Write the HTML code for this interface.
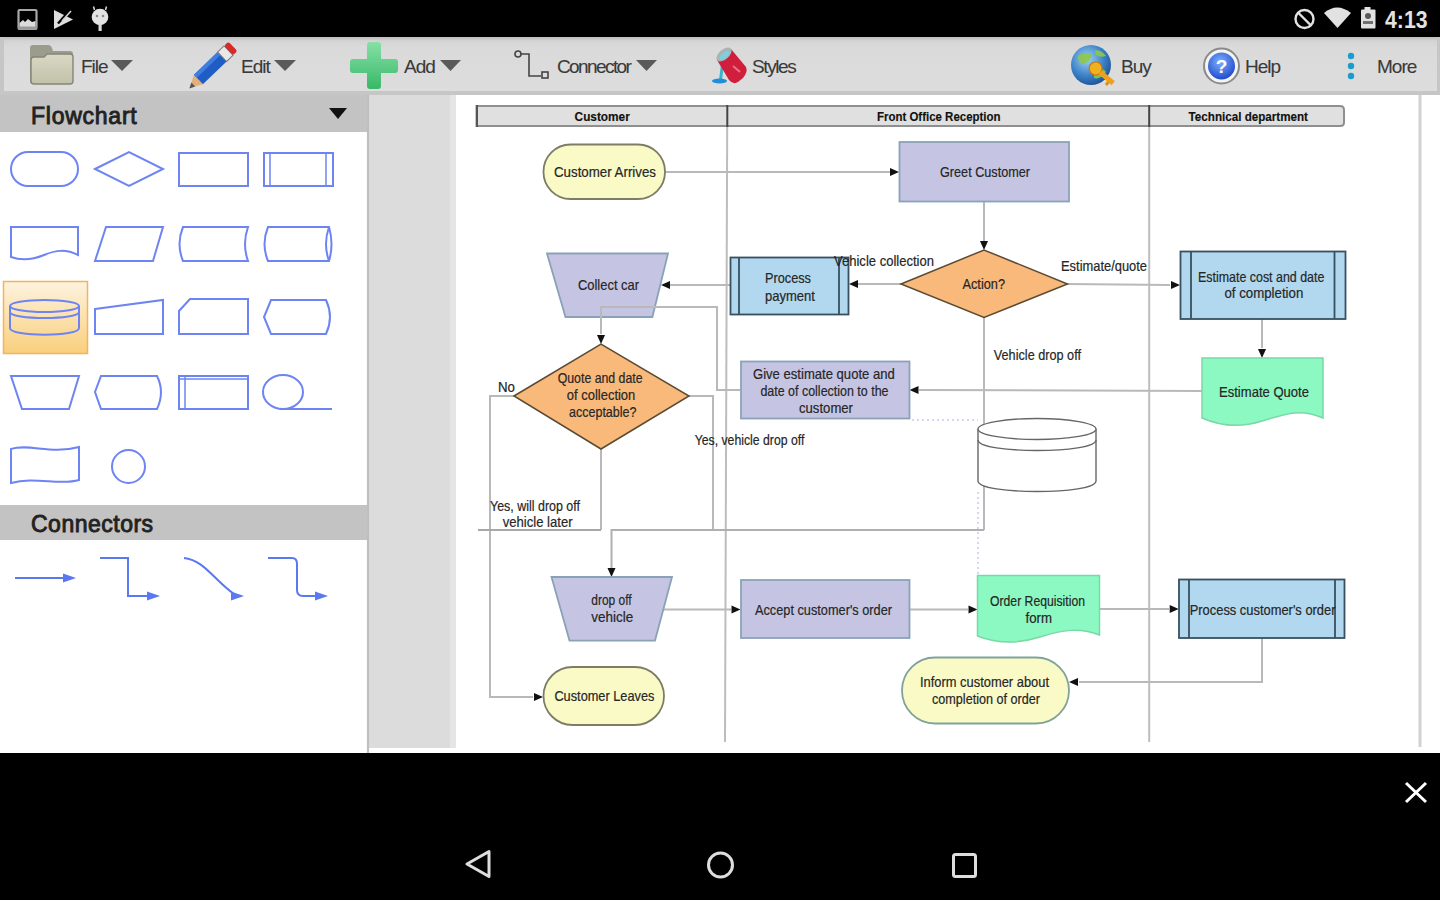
<!DOCTYPE html>
<html><head><meta charset="utf-8">
<style>
html,body{margin:0;padding:0;}
body{width:1440px;height:900px;overflow:hidden;position:relative;background:#fff;font-family:"Liberation Sans",sans-serif;}
.abs{position:absolute;}
#status{left:0;top:0;width:1440px;height:37px;background:#000;}
#toolbar{left:0;top:37px;width:1440px;height:58px;background:#c6c6c6;}
#toolbar .in{position:absolute;left:4px;top:0;width:1433px;height:53.5px;background:linear-gradient(#bdbdbd 0px,#d4d4d4 4px,#dadada 10px,#dddddd 100%);}
#left{left:0;top:95px;width:367px;height:657px;background:#fff;}
#strip{left:367px;top:95px;width:89px;height:653px;background:#dcdcdc;}
#canvas{left:456px;top:95px;width:985px;height:657px;background:#fff;}
#nav{left:0;top:753px;width:1440px;height:148px;background:#000;}
.hdr{position:absolute;left:0;width:367px;background:#c3c3c3;color:#222;font-weight:normal;font-size:22px;-webkit-text-stroke:0.9px #222;}
.tb{position:absolute;font-size:19px;color:#3a3a3a;top:55px;line-height:24px;letter-spacing:-1px;-webkit-text-stroke:0.1px #3a3a3a;}
svg text{font-family:"Liberation Sans",sans-serif;}
</style></head><body>
<div id="status" class="abs"></div>
<div id="toolbar" class="abs"><div class="in"></div></div>
<div id="left" class="abs"></div>
<div id="strip" class="abs"></div>
<div id="canvas" class="abs"></div>
<div id="nav" class="abs"></div>
<div class="hdr" style="top:95px;height:37px;"><span style="position:absolute;left:31px;top:8px;font-size:23px;letter-spacing:0.75px;">Flowchart</span></div>
<div class="hdr" style="top:505px;height:35px;"><span style="position:absolute;left:31px;top:6px;font-size:23px;letter-spacing:0.5px;">Connectors</span></div>
<div class="tb" style="left:81px;">File</div>
<div class="tb" style="left:241px;">Edit</div>
<div class="tb" style="left:404px;">Add</div>
<div class="tb" style="left:557px;letter-spacing:-1.6px;">Connector</div>
<div class="tb" style="left:752px;letter-spacing:-1.4px;">Styles</div>
<div class="tb" style="left:1121px;">Buy</div>
<div class="tb" style="left:1245px;">Help</div>
<div class="tb" style="left:1377px;">More</div>
<svg class="abs" style="left:0;top:0" width="1440" height="900" viewBox="0 0 1440 900">
<defs><linearGradient id="hl" x1="0" y1="0" x2="0" y2="1"><stop offset="0" stop-color="#fdf3df"/><stop offset="1" stop-color="#f9cf7c"/></linearGradient><linearGradient id="plus" x1="0" y1="0" x2="0" y2="1"><stop offset="0" stop-color="#86e0a6"/><stop offset="1" stop-color="#38b868"/></linearGradient><radialGradient id="globe" cx="0.4" cy="0.35" r="0.7"><stop offset="0" stop-color="#9fd2f2"/><stop offset="0.6" stop-color="#3c82c8"/><stop offset="1" stop-color="#1d4f94"/></radialGradient><radialGradient id="help" cx="0.45" cy="0.35" r="0.7"><stop offset="0" stop-color="#7fb0ff"/><stop offset="1" stop-color="#1744c8"/></radialGradient><linearGradient id="fold" x1="0" y1="0" x2="0" y2="1"><stop offset="0" stop-color="#d8d8c4"/><stop offset="1" stop-color="#c2c2aa"/></linearGradient></defs>
<rect x="3.5" y="281.5" width="84" height="72" fill="url(#hl)" stroke="#f4b45a" stroke-width="1.5"/>
<rect x="11" y="152" width="67" height="34" rx="17" fill="none" stroke="#6d84f2" stroke-width="2"/>
<polygon points="95,169 129,152 163,169 129,186" fill="none" stroke="#6d84f2" stroke-width="2"/>
<rect x="179" y="153" width="69" height="33" fill="none" stroke="#6d84f2" stroke-width="2"/>
<rect x="264" y="153" width="69" height="33" fill="none" stroke="#6d84f2" stroke-width="2"/><line x1="270" y1="153" x2="270" y2="186" stroke="#6d84f2" stroke-width="1.5"/><line x1="326" y1="153" x2="326" y2="186" stroke="#6d84f2" stroke-width="1.5"/>
<path d="M11,227 H78 V255 C66,249 56,250 44,255 C32,260 22,261 11,257 Z" fill="none" stroke="#6d84f2" stroke-width="2"/>
<polygon points="106,227 163,227 153,261 95,261" fill="none" stroke="#6d84f2" stroke-width="2"/>
<path d="M183,227 H248 Q242,244 248,261 H183 Q176,244 183,227 Z" fill="none" stroke="#6d84f2" stroke-width="2"/>
<path d="M268,227 H329 Q334,244 329,261 H268 Q261,244 268,227 Z" fill="none" stroke="#6d84f2" stroke-width="2"/><path d="M329,227 Q323,244 329,261" fill="none" stroke="#6d84f2" stroke-width="2"/>
<path d="M10,306 V328 C10,337 79,337 79,328 V306" fill="none" stroke="#6d84f2" stroke-width="2"/><ellipse cx="44.5" cy="306" rx="34.5" ry="6" fill="none" stroke="#6d84f2" stroke-width="2"/><path d="M10,312 C10,320 79,320 79,312" fill="none" stroke="#6d84f2" stroke-width="2"/>
<polygon points="95,309 163,300 163,334 95,334" fill="none" stroke="#6d84f2" stroke-width="2"/>
<polygon points="190,299 248,299 248,334 179,334 179,311" fill="none" stroke="#6d84f2" stroke-width="2"/>
<path d="M271,300 H326 Q334,317 326,334 H271 L264,317 Z" fill="none" stroke="#6d84f2" stroke-width="2"/>
<polygon points="11,376 79,376 69,409 22,409" fill="none" stroke="#6d84f2" stroke-width="2"/>
<path d="M101,376 H157 Q165,392 157,409 H101 L95,392 Z" fill="none" stroke="#6d84f2" stroke-width="2"/>
<rect x="179" y="376" width="69" height="33" fill="none" stroke="#6d84f2" stroke-width="2"/><line x1="185" y1="376" x2="185" y2="409" stroke="#6d84f2" stroke-width="1.5"/><line x1="179" y1="379" x2="248" y2="379" stroke="#6d84f2" stroke-width="1.5"/>
<ellipse cx="283" cy="392" rx="20" ry="17" fill="none" stroke="#6d84f2" stroke-width="2"/><line x1="280" y1="409" x2="332" y2="409" fill="none" stroke="#6d84f2" stroke-width="2"/>
<path d="M11,449 C30,443 50,455 79,447 V480 C60,486 35,476 11,483 Z" fill="none" stroke="#6d84f2" stroke-width="2"/>
<circle cx="128.5" cy="466.5" r="16.5" fill="none" stroke="#6d84f2" stroke-width="2"/>
<line x1="15" y1="578" x2="64" y2="578" fill="none" stroke="#5a78f0" stroke-width="2"/><polygon points="76.0,578.0 63.0,573.5 63.0,582.5" fill="#5a78f0"/>
<polyline points="100,558 128,558 128,596 148,596" fill="none" stroke="#5a78f0" stroke-width="2"/><polygon points="160.0,596.0 147.0,591.5 147.0,600.5" fill="#5a78f0"/>
<path d="M184,558 C204,560 214,580 234,594" fill="none" stroke="#5a78f0" stroke-width="2"/><polygon points="244.0,596.0 231.0,591.5 231.0,600.5" fill="#5a78f0"/>
<path d="M268,558 H292 Q297,558 297,564 V590 Q297,596 303,596 H316" fill="none" stroke="#5a78f0" stroke-width="2"/><polygon points="328.0,596.0 315.0,591.5 315.0,600.5" fill="#5a78f0"/>
<line x1="1420" y1="95" x2="1420" y2="747" stroke="#d2d2d2" stroke-width="3"/>
<line x1="727.2" y1="127" x2="725" y2="742" stroke="#bdbdbd" stroke-width="2"/>
<line x1="1149.2" y1="127" x2="1149.2" y2="742" stroke="#bdbdbd" stroke-width="2"/>
<path d="M476.5,106 H1340 Q1344,106 1344,110 V122.5 Q1344,126 1340,126 H476.5 Z" fill="#e0e0e0" stroke="#8f8f8f" stroke-width="2"/>
<line x1="477" y1="105" x2="477" y2="127" stroke="#555" stroke-width="2"/>
<line x1="727.3" y1="105" x2="727.3" y2="127" stroke="#444" stroke-width="2"/>
<line x1="1149.2" y1="105" x2="1149.2" y2="127" stroke="#444" stroke-width="2"/>
<text x="574.6" y="120.5" textLength="55.2" lengthAdjust="spacingAndGlyphs" font-size="12.5" font-weight="bold" fill="#111" stroke="#111" stroke-width="0.15">Customer</text>
<text x="877.0" y="120.5" textLength="123.5" lengthAdjust="spacingAndGlyphs" font-size="12.5" font-weight="bold" fill="#111" stroke="#111" stroke-width="0.15">Front Office Reception</text>
<text x="1188.6" y="120.5" textLength="119.4" lengthAdjust="spacingAndGlyphs" font-size="12.5" font-weight="bold" fill="#111" stroke="#111" stroke-width="0.15">Technical department</text>
<line x1="665" y1="172" x2="890" y2="172" stroke="#b9b9b9" stroke-width="2" fill="none"/><polygon points="899.0,172.0 890.0,168.0 890.0,176.0" fill="#111"/>
<line x1="984" y1="201" x2="984" y2="241" stroke="#b9b9b9" stroke-width="2" fill="none"/><polygon points="984.0,250.0 980.0,241.0 988.0,241.0" fill="#111"/>
<line x1="901" y1="284" x2="858" y2="284" stroke="#b9b9b9" stroke-width="2" fill="none"/><polygon points="849.0,284.0 858.0,280.0 858.0,288.0" fill="#111"/>
<line x1="1067" y1="284" x2="1170" y2="285" stroke="#b9b9b9" stroke-width="2" fill="none"/><polygon points="1180.0,285.0 1171.0,281.0 1171.0,289.0" fill="#111"/>
<line x1="730" y1="285" x2="670" y2="285" stroke="#b9b9b9" stroke-width="2" fill="none"/><polygon points="661.0,285.0 670.0,281.0 670.0,289.0" fill="#111"/>
<polyline points="514.0,396.0 490.0,396.0 490.0,697.0 533.0,697.0" fill="none" stroke="#b9b9b9" stroke-width="2"/><polygon points="543.0,697.0 534.0,693.0 534.0,701.0" fill="#111"/>
<polyline points="601.0,449.0 601.0,530.0" fill="none" stroke="#b9b9b9" stroke-width="2"/>
<polyline points="689.0,396.0 713.0,396.0 713.0,530.0" fill="none" stroke="#b9b9b9" stroke-width="2"/>
<polyline points="984.0,317.0 984.0,530.0" fill="none" stroke="#b9b9b9" stroke-width="2"/>
<polyline points="601.0,530.0 478.0,530.0" fill="none" stroke="#a8a8a8" stroke-width="2"/>
<polyline points="984.0,530.0 611.5,530.0 611.5,568.0" fill="none" stroke="#b0b0b0" stroke-width="2"/><polygon points="611.5,577.0 607.5,568.0 615.5,568.0" fill="#111"/>
<line x1="663" y1="609.5" x2="731" y2="609.5" stroke="#b9b9b9" stroke-width="2" fill="none"/><polygon points="740.5,609.5 731.5,605.5 731.5,613.5" fill="#111"/>
<line x1="1202" y1="391" x2="919" y2="390" stroke="#b9b9b9" stroke-width="2" fill="none"/><polygon points="909.5,390.0 918.5,386.0 918.5,394.0" fill="#111"/>
<line x1="1262" y1="319" x2="1262" y2="348" stroke="#b9b9b9" stroke-width="2" fill="none"/><polygon points="1262.0,358.0 1258.0,349.0 1266.0,349.0" fill="#111"/>
<line x1="909" y1="609.5" x2="968" y2="609.5" stroke="#b9b9b9" stroke-width="2" fill="none"/><polygon points="977.5,609.5 968.5,605.5 968.5,613.5" fill="#111"/>
<line x1="1099" y1="609" x2="1169" y2="609" stroke="#b9b9b9" stroke-width="2" fill="none"/><polygon points="1178.7,609.0 1169.7,605.0 1169.7,613.0" fill="#111"/>
<polyline points="1262.0,638.0 1262.0,682.0 1079.0,682.0" fill="none" stroke="#b9b9b9" stroke-width="2"/><polygon points="1069.0,682.0 1078.0,678.0 1078.0,686.0" fill="#111"/>
<polyline points="912,420 978,420" fill="none" stroke="#d6d6f4" stroke-width="2" stroke-dasharray="2,3"/>
<polyline points="978,492 978,575" fill="none" stroke="#d6d6f4" stroke-width="2" stroke-dasharray="2,3"/>
<rect x="543.5" y="144.5" width="121.5" height="54.5" rx="27" fill="#fafac6" stroke="#7d7d66" stroke-width="1.8"/>
<text x="554.0" y="177.1" textLength="102.0" lengthAdjust="spacingAndGlyphs" font-size="14.3" font-weight="normal" fill="#262626" stroke="#262626" stroke-width="0.2">Customer Arrives</text>
<rect x="899.5" y="142" width="169.5" height="59.5" fill="#c5c5e3" stroke="#8ba2b6" stroke-width="1.8"/>
<text x="940.0" y="177.1" textLength="90.0" lengthAdjust="spacingAndGlyphs" font-size="14.3" font-weight="normal" fill="#262626" stroke="#262626" stroke-width="0.2">Greet Customer</text>
<polygon points="901,284 984,250 1067.5,284 984,317.5" fill="#f8b97a" stroke="#5b4b35" stroke-width="1.5"/>
<text x="962.5" y="289.1" textLength="42.5" lengthAdjust="spacingAndGlyphs" font-size="14.3" font-weight="normal" fill="#262626" stroke="#262626" stroke-width="0.2">Action?</text>
<rect x="730.5" y="257.5" width="118" height="57" fill="#b1d8ee" stroke="#38505f" stroke-width="1.8"/><line x1="739" y1="258" x2="739" y2="314" stroke="#38505f" stroke-width="1.8"/><line x1="839" y1="258" x2="839" y2="314" stroke="#38505f" stroke-width="1.8"/>
<text x="765.0" y="282.6" textLength="46.0" lengthAdjust="spacingAndGlyphs" font-size="14.3" font-weight="normal" fill="#262626" stroke="#262626" stroke-width="0.2">Process</text>
<text x="765.0" y="300.6" textLength="50.0" lengthAdjust="spacingAndGlyphs" font-size="14.3" font-weight="normal" fill="#262626" stroke="#262626" stroke-width="0.2">payment</text>
<text x="834.0" y="266.1" textLength="100.0" lengthAdjust="spacingAndGlyphs" font-size="14.3" font-weight="normal" fill="#262626" stroke="#262626" stroke-width="0.2">Vehicle collection</text>
<text x="1061.0" y="271.1" textLength="86.0" lengthAdjust="spacingAndGlyphs" font-size="14.3" font-weight="normal" fill="#262626" stroke="#262626" stroke-width="0.2">Estimate/quote</text>
<rect x="1180.5" y="251.5" width="165" height="67.5" fill="#b1d8ee" stroke="#38505f" stroke-width="1.8"/><line x1="1191" y1="252" x2="1191" y2="319" stroke="#38505f" stroke-width="1.8"/><line x1="1334.5" y1="252" x2="1334.5" y2="319" stroke="#38505f" stroke-width="1.8"/>
<text x="1198.0" y="281.8" textLength="126.4" lengthAdjust="spacingAndGlyphs" font-size="14.3" font-weight="normal" fill="#262626" stroke="#262626" stroke-width="0.2">Estimate cost and date</text>
<text x="1224.4" y="298.4" textLength="78.9" lengthAdjust="spacingAndGlyphs" font-size="14.3" font-weight="normal" fill="#262626" stroke="#262626" stroke-width="0.2">of completion</text>
<polygon points="547,253.5 668,253.5 652.4,317 565.5,317" fill="#c5c5e3" stroke="#8ba2b6" stroke-width="1.8"/>
<text x="578.0" y="290.1" textLength="61.0" lengthAdjust="spacingAndGlyphs" font-size="14.3" font-weight="normal" fill="#262626" stroke="#262626" stroke-width="0.2">Collect car</text>
<polygon points="514,396 601,344 689,396 601,449" fill="#f8b97a" stroke="#5b4b35" stroke-width="1.5"/>
<text x="557.7" y="383.1" textLength="84.9" lengthAdjust="spacingAndGlyphs" font-size="14.3" font-weight="normal" fill="#262626" stroke="#262626" stroke-width="0.2">Quote and date</text>
<text x="566.8" y="400.1" textLength="68.5" lengthAdjust="spacingAndGlyphs" font-size="14.3" font-weight="normal" fill="#262626" stroke="#262626" stroke-width="0.2">of collection</text>
<text x="569.0" y="417.1" textLength="67.5" lengthAdjust="spacingAndGlyphs" font-size="14.3" font-weight="normal" fill="#262626" stroke="#262626" stroke-width="0.2">acceptable?</text>
<text x="498.0" y="392.1" textLength="17.0" lengthAdjust="spacingAndGlyphs" font-size="14.3" font-weight="normal" fill="#262626" stroke="#262626" stroke-width="0.2">No</text>
<text x="490.0" y="511.1" textLength="90.0" lengthAdjust="spacingAndGlyphs" font-size="14.3" font-weight="normal" fill="#262626" stroke="#262626" stroke-width="0.2">Yes, will drop off</text>
<text x="502.7" y="527.1" textLength="69.9" lengthAdjust="spacingAndGlyphs" font-size="14.3" font-weight="normal" fill="#262626" stroke="#262626" stroke-width="0.2">vehicle later</text>
<text x="694.7" y="444.5" textLength="109.7" lengthAdjust="spacingAndGlyphs" font-size="14.3" font-weight="normal" fill="#262626" stroke="#262626" stroke-width="0.2">Yes, vehicle drop off</text>
<rect x="741" y="361.5" width="168.5" height="57" fill="#c5c5e3" stroke="#8ba2b6" stroke-width="1.8"/>
<text x="753.0" y="378.9" textLength="141.8" lengthAdjust="spacingAndGlyphs" font-size="14.3" font-weight="normal" fill="#262626" stroke="#262626" stroke-width="0.2">Give estimate quote and</text>
<text x="760.4" y="395.9" textLength="128.1" lengthAdjust="spacingAndGlyphs" font-size="14.3" font-weight="normal" fill="#262626" stroke="#262626" stroke-width="0.2">date of collection to the</text>
<text x="799.0" y="413.1" textLength="54.0" lengthAdjust="spacingAndGlyphs" font-size="14.3" font-weight="normal" fill="#262626" stroke="#262626" stroke-width="0.2">customer</text>
<text x="993.8" y="359.6" textLength="87.2" lengthAdjust="spacingAndGlyphs" font-size="14.3" font-weight="normal" fill="#262626" stroke="#262626" stroke-width="0.2">Vehicle drop off</text>
<path d="M978,429 V481 C978,495 1096,495 1096,481 V429" fill="#fff" stroke="#666" stroke-width="1.4"/><ellipse cx="1037" cy="429" rx="59" ry="10.5" fill="#fff" stroke="#666" stroke-width="1.4"/><path d="M978,440 C978,454 1096,454 1096,440" fill="none" stroke="#666" stroke-width="1.4"/>
<path d="M1202,358 H1323 V418 C1300,408 1285,414 1262,421 C1240,428 1220,426 1202,418 Z" fill="#8cf9c2" stroke="#79d9a6" stroke-width="1.5"/>
<text x="1219.0" y="397.1" textLength="90.0" lengthAdjust="spacingAndGlyphs" font-size="14.3" font-weight="normal" fill="#262626" stroke="#262626" stroke-width="0.2">Estimate Quote</text>
<polygon points="551.5,577 672,577 655,640.6 569.5,640.6" fill="#c5c5e3" stroke="#8ba2b6" stroke-width="1.8"/>
<text x="591.3" y="605.1" textLength="40.4" lengthAdjust="spacingAndGlyphs" font-size="14.3" font-weight="normal" fill="#262626" stroke="#262626" stroke-width="0.2">drop off</text>
<text x="591.3" y="622.1" textLength="42.0" lengthAdjust="spacingAndGlyphs" font-size="14.3" font-weight="normal" fill="#262626" stroke="#262626" stroke-width="0.2">vehicle</text>
<rect x="543.5" y="667" width="120.5" height="58" rx="29" fill="#fafac6" stroke="#7d7d66" stroke-width="1.8"/>
<text x="554.4" y="701.1" textLength="100.0" lengthAdjust="spacingAndGlyphs" font-size="14.3" font-weight="normal" fill="#262626" stroke="#262626" stroke-width="0.2">Customer Leaves</text>
<rect x="741" y="580" width="168.5" height="58" fill="#c5c5e3" stroke="#8ba2b6" stroke-width="1.8"/>
<text x="755.0" y="614.7" textLength="137.0" lengthAdjust="spacingAndGlyphs" font-size="14.3" font-weight="normal" fill="#262626" stroke="#262626" stroke-width="0.2">Accept customer's order</text>
<path d="M977.5,575.5 H1099.5 V635 C1080,627 1062,630 1040,637 C1015,645 995,643 977.5,636 Z" fill="#8cf9c2" stroke="#79d9a6" stroke-width="1.5"/>
<text x="990.0" y="606.1" textLength="95.0" lengthAdjust="spacingAndGlyphs" font-size="14.3" font-weight="normal" fill="#262626" stroke="#262626" stroke-width="0.2">Order Requisition</text>
<text x="1025.5" y="622.6" textLength="26.5" lengthAdjust="spacingAndGlyphs" font-size="14.3" font-weight="normal" fill="#262626" stroke="#262626" stroke-width="0.2">form</text>
<rect x="1179" y="579.5" width="165.5" height="58.5" fill="#b1d8ee" stroke="#38505f" stroke-width="1.8"/><line x1="1189" y1="580" x2="1189" y2="638" stroke="#38505f" stroke-width="1.8"/><line x1="1335" y1="580" x2="1335" y2="638" stroke="#38505f" stroke-width="1.8"/>
<text x="1189.7" y="615.1" textLength="145.8" lengthAdjust="spacingAndGlyphs" font-size="14.3" font-weight="normal" fill="#262626" stroke="#262626" stroke-width="0.2">Process customer's order</text>
<rect x="902" y="657.5" width="167" height="66" rx="33" fill="#fafac6" stroke="#7fa39a" stroke-width="1.8"/>
<text x="920.0" y="687.1" textLength="129.0" lengthAdjust="spacingAndGlyphs" font-size="14.3" font-weight="normal" fill="#262626" stroke="#262626" stroke-width="0.2">Inform customer about</text>
<text x="932.0" y="703.6" textLength="108.0" lengthAdjust="spacingAndGlyphs" font-size="14.3" font-weight="normal" fill="#262626" stroke="#262626" stroke-width="0.2">completion of order</text>
<polyline points="740.0,390.0 717.0,390.0 717.0,307.0 601.0,307.0 601.0,334.0" fill="none" stroke="#b9b9b9" stroke-width="2"/><polygon points="601.0,344.0 597.0,335.0 605.0,335.0" fill="#111"/>
<polygon points="111,60 133,60 122.0,71" fill="#5a5a5a"/>
<polygon points="274,60 296,60 285.0,71" fill="#5a5a5a"/>
<polygon points="440,60 461,60 450.5,71" fill="#5a5a5a"/>
<polygon points="636,60 657,60 646.5,71" fill="#5a5a5a"/>
<path d="M30,48 Q30,45 33,45 H48 Q51,45 52,48 L53,51 H70 Q73,51 73,54 V81 Q73,84 70,84 H33 Q30,84 30,81 Z" fill="#9c9c8c"/>
<path d="M31,60 Q31,57 34,57 H44 L47,54 H70 Q73,54 73,57 V81 Q73,84 70,84 H34 Q31,84 31,81 Z" fill="url(#fold)" stroke="#85857a" stroke-width="1.4"/>
<g transform="translate(212,66.5) rotate(-44)"><rect x="-19" y="-6.5" width="33" height="13" fill="#1f5cc4"/><rect x="-19" y="-6.5" width="33" height="4" fill="#3f7ee0"/><rect x="14" y="-6.5" width="9" height="13" fill="#e8e8e8" stroke="#777" stroke-width="1"/><rect x="23" y="-6.5" width="6" height="13" rx="2" fill="#d82a2a"/><polygon points="-19,-6.5 -31,0 -19,6.5" fill="#e2b07c"/><polygon points="-26,-2.7 -31.5,0 -26,2.7" fill="#555"/></g>
<path d="M367,45 Q367,42 370,42 H378 Q381,42 381,45 V59 H395 Q398,59 398,62 V70 Q398,73 395,73 H381 V86 Q381,89 378,89 H370 Q367,89 367,86 V73 H353 Q350,73 350,70 V62 Q350,59 353,59 H367 Z" fill="url(#plus)"/>
<g fill="none" stroke="#444" stroke-width="1.6"><circle cx="518" cy="54" r="3"/><path d="M521,54 H529 V76 H541"/><rect x="542" y="72" width="6" height="6"/></g>
<line x1="723" y1="60" x2="720.5" y2="80" stroke="#3cb4c8" stroke-width="3"/><ellipse cx="719.5" cy="81" rx="7.5" ry="2.6" fill="#1f8fdc"/>
<path d="M717,60 L731,49 L746,67 Q748,72 743,78 L738,82 Q733,85 729,80 Z" fill="#cf1f3c"/>
<ellipse cx="724" cy="54.5" rx="9" ry="5" transform="rotate(-40 724 54.5)" fill="#a8b4b8"/><ellipse cx="724.5" cy="55.5" rx="6" ry="3" transform="rotate(-40 724.5 55.5)" fill="#7fd0d8"/>
<path d="M733,66 L740,72" stroke="#f07088" stroke-width="2"/>
<circle cx="1091" cy="65" r="20" fill="url(#globe)"/><path d="M1078,56 Q1085,50 1092,55 Q1090,62 1083,64 Q1078,63 1078,56 Z M1094,70 Q1102,66 1106,72 Q1100,80 1094,78 Z M1095,50 Q1102,50 1106,56 Q1100,58 1096,55 Z" fill="#8cc84a" opacity="0.9"/>
<g transform="translate(1101,73) rotate(40)"><circle cx="-7" cy="0" r="6.5" fill="#f0b020" stroke="#c07810" stroke-width="1.2"/><rect x="-1" y="-2.5" width="17" height="5" fill="#f0a020"/><rect x="10" y="2" width="3" height="4" fill="#e09010"/></g>
<circle cx="1221.5" cy="66" r="17.5" fill="#f4f4f4" stroke="#8a8a8a" stroke-width="2"/><circle cx="1221.5" cy="66" r="13.5" fill="url(#help)"/><text x="1221.5" y="73" text-anchor="middle" font-size="19" font-weight="bold" fill="#fff">?</text>
<circle cx="1351" cy="56" r="3.2" fill="#1a9ccf"/><circle cx="1351" cy="66" r="3.2" fill="#1a9ccf"/><circle cx="1351" cy="76" r="3.2" fill="#1a9ccf"/>
<polygon points="329,108 347,108 338,119" fill="#111"/>
<line x1="368" y1="95" x2="368" y2="753" stroke="#bfbfbf" stroke-width="2.2"/>
<rect x="450" y="95" width="6" height="653" fill="#e5e5e5"/>
<rect x="18.5" y="10" width="18" height="19" rx="1" fill="none" stroke="#a8a8a8" stroke-width="2.2"/><path d="M19.5,23 L23,20 L25,22 L28,19 L32,22 L35.5,21 V28 H19.5 Z" fill="#dcdcdc"/><rect x="18" y="26.5" width="19" height="3" fill="#9a9a9a"/>
<path d="M54,10 L73,19.5 L54,29 Z" fill="#dedede"/><path d="M58,23.5 L70,10" stroke="#000" stroke-width="2.4"/><path d="M62,21 L71,11" stroke="#cfcfcf" stroke-width="1.6"/>
<circle cx="100" cy="17" r="8.3" fill="#e2e2e2"/><rect x="98.5" y="24" width="3.2" height="7" fill="#d8d8d8"/><circle cx="97" cy="16" r="1.3" fill="#8a8a8a"/><circle cx="103" cy="16" r="1.3" fill="#8a8a8a"/><path d="M94.5,10 L93.5,6.5 M105.5,10 L106.5,6.5" stroke="#cfcfcf" stroke-width="1.6"/>
<circle cx="1304.5" cy="19" r="9" fill="none" stroke="#e2e2e2" stroke-width="2.4"/><line x1="1298.5" y1="13" x2="1310.5" y2="25" stroke="#e2e2e2" stroke-width="2.4"/>
<path d="M1324,13 Q1337,2 1351,13 L1337.5,28 Z" fill="#e2e2e2"/>
<rect x="1364.5" y="7" width="6" height="3" fill="#e2e2e2"/><rect x="1361" y="9.5" width="14.5" height="19" rx="1" fill="#e2e2e2"/><path d="M1368,13 Q1365,13 1365,16 Q1365,19 1368,19 Q1371,19 1371,16 Q1371,13 1368,13 Z" fill="#000" opacity="0.6"/><rect x="1363" y="21" width="10" height="3" fill="#000" opacity="0.5"/>
<text x="1385" y="28" textLength="42.5" lengthAdjust="spacingAndGlyphs" font-size="23.5" font-weight="bold" fill="#e2e2e2">4:13</text>
<polygon points="467,864 489,851.5 489,876.5" fill="none" stroke="#dedede" stroke-width="3" stroke-linejoin="round"/>
<circle cx="720.5" cy="865" r="12" fill="none" stroke="#dedede" stroke-width="3"/>
<rect x="953.5" y="854.5" width="22" height="22" rx="2" fill="none" stroke="#dedede" stroke-width="3"/>
<path d="M1406,783 L1426,802 M1426,783 L1406,802" stroke="#fff" stroke-width="3"/>
</svg>
</body></html>
